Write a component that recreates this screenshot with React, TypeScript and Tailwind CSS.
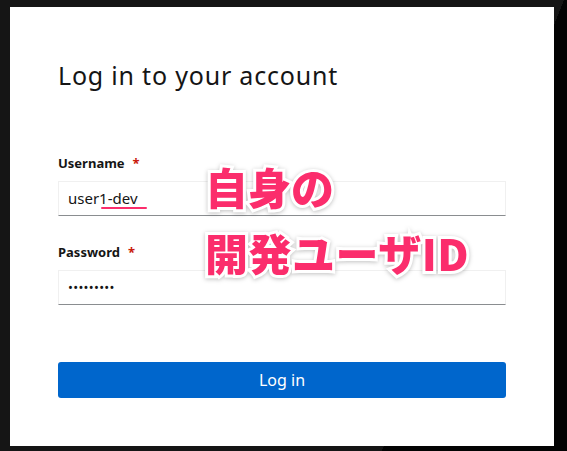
export default function App() {
  return (
    <div className="min-h-screen w-full bg-[linear-gradient(112deg,#151515_523px,#030303_523px)] pt-[7px] pl-[10px] font-['Noto_Sans',sans-serif]">
      <div className="relative w-[544px] h-[439px] bg-white pt-[53px] px-[48px]">
        <h1 className="text-[25px] leading-[30px] tracking-[0.8px] text-[#151515] font-normal">Log in to your account</h1>

        <div className="mt-[64px] flex items-center gap-[8px] h-[20px] text-[13px] font-bold text-[#151515]">
          Username <span className="text-[#c9190b] text-[13px]">*</span>
        </div>
        <div className="relative mt-[7px] h-[35px] border border-[#f0f0f0] border-b-[#8a8d90] flex items-center px-[9px] text-[15px] text-[#151515]">
          user1-dev
          <div className="absolute left-[42px] top-[25px] w-[46px] h-[2px] rounded-full bg-[#fb2d6c]" />
        </div>

        <div className="mt-[27px] flex items-center gap-[8px] h-[20px] text-[13px] font-bold text-[#151515]">
          Password <span className="text-[#c9190b] text-[13px]">*</span>
        </div>
        <div className="mt-[7px] h-[35px] border border-[#f0f0f0] border-b-[#8a8d90] flex items-center px-[9px] text-[13px] tracking-[0.3px] text-[#151515]">
          •••••••••
        </div>

        <button className="mt-[57px] w-full h-[36px] rounded-[3px] bg-[#0066cc] text-white text-[16px]">Log in</button>

        <div className="absolute left-[195px] top-[152px] flex flex-col gap-[12px] font-['Noto_Sans_CJK_JP',sans-serif] font-black text-[43px] leading-[54px] text-[#fb2d6c] [-webkit-text-stroke:6px_white] [paint-order:stroke_fill] drop-shadow-[0_1px_2px_rgba(0,0,0,0.25)]">
          <span>自身の</span>
          <span className="tracking-[0.5px]">開発ユーザID</span>
        </div>
      </div>
    </div>
  );
}
